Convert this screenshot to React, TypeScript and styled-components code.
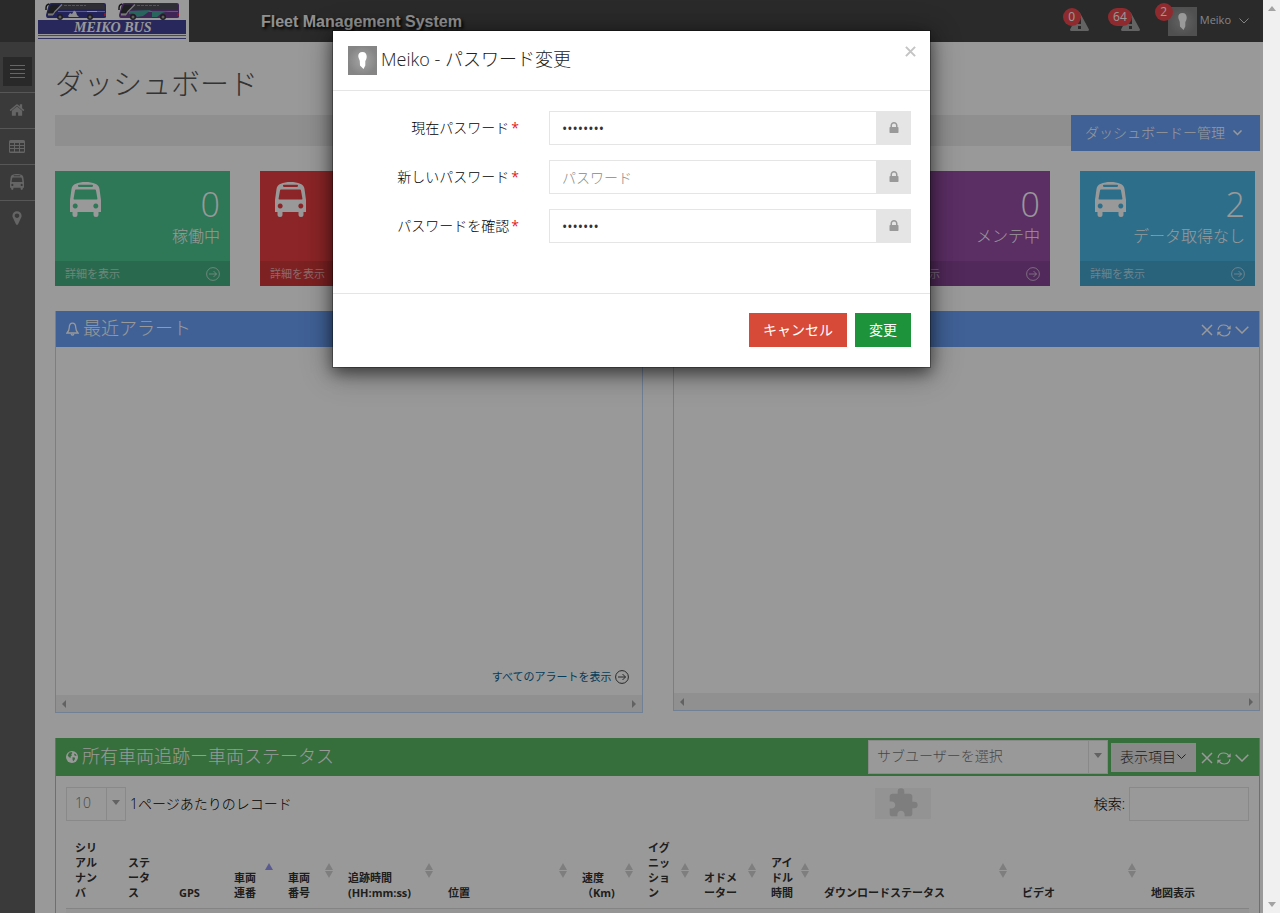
import React from "react";
import styled, { createGlobalStyle } from "styled-components";

const GlobalStyle = createGlobalStyle`
  *, *::before, *::after { box-sizing: border-box; }
  body {
    margin: 0;
    background: #fff;
    color: #000;
    font-family: "Open Sans", "Noto Sans CJK JP", sans-serif;
    font-size: 14px;
    font-weight: 300;
    line-height: 20px;
  }
  button, input, select { font: inherit; color: inherit; border-radius: 0; margin: 0; }
  button { cursor: pointer; border: 0; padding: 0; background: none; }
  h1, h2, p { margin: 0; font-weight: 300; }
  a { color: inherit; text-decoration: none; }
`;

/* ---------- shell ---------- */

const Shell = styled.div`
  display: flex;
  height: 100vh;
  overflow: hidden;
`;
const Page = styled.div`
  position: relative;
  flex: 1;
  min-width: 0;
  display: flex;
  flex-direction: column;
  overflow: hidden;
`;
const ScrollRail = styled.div<{ $horizontal?: boolean }>`
  display: flex;
  flex: none;
  flex-direction: ${(p) => (p.$horizontal ? "row" : "column")};
  justify-content: space-between;
  align-items: center;
  background: #f0f0f0;
  padding: ${(p) => (p.$horizontal ? "0 4px" : "5px 0")};
  ${(p) => (p.$horizontal ? "height: 17px;" : "width: 17px;")}
`;
const Main = styled.div`
  display: flex;
  flex: 1;
  min-height: 0;
`;

/* ---------- top bar ---------- */

const TopBar = styled.header`
  display: flex;
  flex: none;
  height: 42px;
  background: #464646;
  color: #ddd;
`;
const LogoLink = styled.a`
  display: block;
  width: 154px;
  height: 42px;
  margin-left: 35px;
  background: #fff;
`;
const AppName = styled.div`
  margin-left: 72px;
  padding-top: 12px;
  font: bold 16px/20px "Liberation Sans", sans-serif;
  color: #f0f0f0;
  text-shadow: 2px 2px 3px #000;
`;
const TopActions = styled.div`
  display: flex;
  margin-left: auto;
  padding-right: 14px;
`;
const TopButton = styled.button`
  position: relative;
  display: flex;
  align-items: center;
  height: 42px;
  margin-right: 32px;
  font-size: 11px;
  font-weight: 400;
  color: #ddd;
  &:last-child { margin: 0 0 0 -4px; }
  > span { margin: 0 8px 2px 3px; }
`;
const Badge = styled.span`
  && { margin: 0; }
  position: absolute;
  right: 8px;
  top: 8px;
  min-width: 18px;
  height: 18px;
  padding: 0 5px;
  border-radius: 9px;
  background: #ef484d;
  color: #fff;
  font-size: 12px;
  line-height: 18px;
  text-align: center;
  button:last-child > & { right: auto; left: -13px; top: 3px; }
`;

/* ---------- side bar ---------- */

const SideBar = styled.nav`
  flex: none;
  width: 35px;
  background: #626262;
  color: #a8a8a8;
`;
const ToggleButton = styled.button`
  display: flex;
  align-items: center;
  justify-content: center;
  width: 29px;
  height: 29px;
  margin: 15px 3px 6px;
  background: #454545;
  color: #aaa;
`;
const SideLink = styled.a`
  display: flex;
  align-items: center;
  justify-content: center;
  height: 36px;
  padding: 0 1px 1px 0;
  border-top: 1px solid #929292;
`;

/* ---------- content ---------- */

const Content = styled.main`
  flex: 1;
  min-width: 0;
  padding: 20px 3px 0 20px;
`;
const PageTitle = styled.h1`
  height: 53px;
  font-size: 29px;
  line-height: 44px;
  color: #555;
`;
const Crumbs = styled.div`
  display: flex;
  justify-content: space-between;
  height: 36px;
  margin-bottom: 20px;
`;
const CrumbBar = styled.div`
  flex: 1;
  height: 31px;
  background: #eee;
`;
const ManageButton = styled.button`
  display: flex;
  align-items: center;
  gap: 8px;
  height: 36px;
  padding: 0 18px 0 14px;
  background: #6ca2fb;
  color: #fff;
`;
const Tiles = styled.div`
  display: grid;
  grid-template-columns: repeat(6, 1fr);
  gap: 30px;
  margin: 0 5px 25px 0;
`;
const Tile = styled.section<{ $color: string }>`
  background: ${(p) => p.$color};
  color: #fff;
`;
const TileTop = styled.div`
  display: flex;
  justify-content: space-between;
  height: 90px;
  padding: 11px 10px 0 15px;
  white-space: nowrap;
`;
const TileFigures = styled.div`
  text-align: right;
  font-size: 16px;
  line-height: 20px;
  > strong {
    display: block;
    padding: 2px 0;
    font-size: 34px;
    line-height: 40px;
    font-weight: 300;
  }
`;
const TileMore = styled.a`
  display: flex;
  align-items: center;
  justify-content: space-between;
  height: 25px;
  padding: 0 10px;
  background: rgba(0, 0, 0, 0.1);
  font-size: 11px;
  font-weight: 400;
  color: rgba(255, 255, 255, 0.6);
`;
const PanelRow = styled.div`
  display: grid;
  grid-template-columns: 1fr 1fr;
  align-items: start;
  gap: 30px;
  margin-bottom: 25px;
`;
const Panel = styled.section<{ $green?: boolean }>`
  border: 1px solid ${(p) => (p.$green ? "#8fd49a" : "#bed5fb")};
  border-top: 0;
`;
const PanelHead = styled.div<{ $green?: boolean }>`
  display: flex;
  align-items: center;
  height: ${(p) => (p.$green ? 38 : 36)}px;
  padding: 0 10px;
  background: ${(p) => (p.$green ? "#5ab865" : "#6ca2fb")};
  color: #fff;
`;
const PanelTitle = styled.h2`
  display: flex;
  align-items: center;
  gap: 4px;
  margin-right: auto;
  padding-bottom: 2px;
  font-size: 18px;
  line-height: 26px;
  svg { margin-top: 2px; }
`;
const Tools = styled.div`
  display: flex;
  align-items: center;
  gap: 4px;
  padding-top: 2px;
  button { display: flex; }
`;
const PanelBody = styled.div<{ $height: number }>`
  display: flex;
  align-items: flex-end;
  justify-content: flex-end;
  height: ${(p) => p.$height}px;
  padding: 0 13px 8px;
  font-size: 11px;
`;
const AllAlerts = styled.a`
  display: flex;
  align-items: center;
  gap: 3px;
  color: #0a6494;
  font-weight: 400;
  svg { color: #444; }
`;

const SelectBox = styled.span<{ $width: number; $push?: number }>`
  position: relative;
  display: inline-flex;
  flex: none;
  width: ${(p) => p.$width}px;
  margin-right: ${(p) => p.$push ?? 0}px;
  select {
    appearance: none;
    width: 100%;
    height: 34px;
    padding: 0 24px 2px 8px;
    border: 1px solid #e5e5e5;
    background: #fff;
    color: #777;
  }
  > span {
    position: absolute;
    inset: 1px 1px 1px auto;
    width: 19px;
    padding-bottom: 4px;
    border-left: 1px solid #e5e5e5;
    display: flex;
    align-items: center;
    justify-content: center;
    pointer-events: none;
  }
`;
const ColumnsButton = styled.button`
  display: flex;
  align-items: center;
  gap: 1px;
  height: 29px;
  margin-right: 5px;
  padding: 0 10px 0 9px;
  background: #e5e5e5;
  color: #333;
`;
const Controls = styled.div`
  display: flex;
  align-items: center;
  height: 34px;
  margin: 11px 10px 12px;
`;
const RecordsLabel = styled.label`
  display: flex;
  align-items: center;
  gap: 4px;
  flex: 1;
`;
const PluginBox = styled.span`
  display: flex;
  align-items: center;
  justify-content: center;
  width: 56px;
  height: 31px;
  margin-bottom: 2px;
  background: #f5f5f5;
  color: #d2d2d2;
`;
const SearchLabel = styled.label`
  display: flex;
  align-items: center;
  justify-content: flex-end;
  gap: 4px;
  width: 318px;
  input {
    width: 120px;
    height: 34px;
    border: 1px solid #e5e5e5;
    background: #fff;
    padding: 0 8px;
  }
`;
const TableWrap = styled.div`
  padding: 0 10px;
`;
const Table = styled.table`
  width: 100%;
  table-layout: fixed;
  border-collapse: collapse;
  font-size: 11px;
  line-height: 15px;
  th {
    position: relative;
    height: 75px;
    padding: 6px 0 8px 9px;
    border-bottom: 1px solid #ddd;
    text-align: left;
    vertical-align: bottom;
    white-space: nowrap;
    font-weight: 700;
    color: #333;
  }
  td { height: 36px; background: #f9f9f9; }
`;
const SortMark = styled.svg`
  position: absolute;
  right: 6px;
  bottom: 30px;
`;

/* ---------- dialog ---------- */

const Backdrop = styled.div`
  position: absolute;
  inset: 0;
  display: flex;
  justify-content: center;
  align-items: flex-start;
  padding-top: 30px;
  background: rgba(0, 0, 0, 0.4);
`;
const Dialog = styled.form`
  width: 599px;
  max-width: 100%;
  background: #fff;
  background-clip: padding-box;
  border: 1px solid rgba(0, 0, 0, 0.3);
  box-shadow: 0 5px 15px rgba(0, 0, 0, 0.5), 0 5px 30px rgba(0, 0, 0, 0.3);
`;
const DialogHead = styled.div`
  display: flex;
  align-items: flex-start;
  height: 60px;
  padding: 15px 14px 0 15px;
  border-bottom: 1px solid #e5e5e5;
  > button { display: flex; margin-left: auto; color: #c4c4c4; }
`;
const DialogTitle = styled.h2`
  display: flex;
  gap: 4px;
  font-size: 18px;
  line-height: 26px;
  color: #222;
`;
const DialogBody = styled.div`
  display: grid;
  gap: 15px;
  padding: 20px 19px 50px 18px;
`;
const Field = styled.div`
  display: flex;
  align-items: center;
  justify-content: space-between;
  > label { width: 168px; text-align: right; }
  > label i { color: #e02222; font-style: normal; font-weight: 400; padding-left: 2px; }
`;
const InputGroup = styled.div`
  display: flex;
  width: 362px;
  input {
    flex: 1;
    min-width: 0;
    height: 34px;
    padding: 0 12px;
    border: 1px solid #e5e5e5;
    border-right: 0;
    background: #fff;
    color: #333;
    font-weight: 400;
  }
  input::placeholder { color: #888; opacity: 1; font-weight: 300; }
  > span {
    display: flex;
    align-items: center;
    justify-content: center;
    width: 35px;
    background: #e5e5e5;
    color: #999;
  }
`;
const DialogFoot = styled.div`
  display: flex;
  justify-content: flex-end;
  gap: 8px;
  padding: 19px 19px 20px;
  border-top: 1px solid #e5e5e5;
`;
const ActionButton = styled.button<{ $color: string }>`
  height: 34px;
  padding: 0 14px;
  background: ${(p) => p.$color};
  color: #fff;
  font-weight: 400;
`;

/* ---------- drawings ---------- */

const BusIcon = ({ width, height }: { width: number; height: number }) => (
  <svg width={width} height={height} viewBox="0 0 31 35" fill="currentColor" fillRule="evenodd" aria-hidden="true">
    <path d="M0 30V18L1.500 7C2 2 8 0 15.500 0S29 2 29.500 7L31 18V30H28.500V32.500a2.500 2.500 0 0 1-5 0V30H7.500V32.500a2.500 2.500 0 0 1-5 0V30ZM9 2.700a1.100 1.100 0 0 0 0 2.200H22a1.100 1.100 0 0 0 0-2.200ZM6 7.600a1 1 0 0 0-1 .8L3.600 16.600a.8.8 0 0 0 .8 1H26.600a.8.8 0 0 0 .8-1L26 8.400a1 1 0 0 0-1-.8ZM5.200 21.600a2.500 2.500 0 1 0 .01 0ZM25.800 21.600a2.500 2.500 0 1 0 .01 0Z" />
  </svg>
);
const Glyph = ({ d, size }: { d: string; size: number }) => (
  <svg width={size} height={size} viewBox="0 0 1792 1792" fill="currentColor" aria-hidden="true">
    <path d={d} />
  </svg>
);
const HOME =
  "M1472 992v480q0 26-19 45t-45 19h-384v-384h-256v384h-384q-26 0-45-19t-19-45v-480q0-1 .5-3t.5-3l575-474 575 474q1 2 1 6zm223-69l-62 74q-8 9-21 11h-3q-13 0-21-7l-692-577-692 577q-12 8-24 7-13-2-21-11l-62-74q-8-10-7-23.500t11-21.500l719-599q32-26 76-26t76 26l244 204v-195q0-14 9-23t23-9h192q14 0 23 9t9 23v408l219 182q10 8 11 21.500t-7 23.500z";
const PIN =
  "M1152 640q0-106-75-181t-181-75-181 75-75 181 75 181 181 75 181-75 75-181zm256 0q0 109-33 179l-364 774q-16 33-47.500 52t-67.500 19-67.500-19-46.500-52l-365-774q-33-70-33-179 0-212 150-362t362-150 362 150 150 362z";
const LOCK =
  "M640 768h512v-192q0-106-75-181t-181-75-181 75-75 181v192zm832 96v576q0 40-28 68t-68 28h-960q-40 0-68-28t-28-68v-576q0-40 28-68t68-28h32v-192q0-184 132-316t316-132 316 132 132 316v192h32q40 0 68 28t28 68z";

const MenuIcon = () => (
  <svg width="15" height="14" viewBox="0 0 15 14" stroke="currentColor" aria-hidden="true">
    <path d="M0 .5H15M0 4.500H15M0 8.500H15M0 12.500H15" />
  </svg>
);
const GridIcon = () => (
  <svg width="16" height="13" viewBox="0 0 16 13" fill="currentColor" fillRule="evenodd" aria-hidden="true">
    <path d="M1.500 0H14.500A1.500 1.500 0 0 1 16 1.500V11.500A1.500 1.500 0 0 1 14.500 13H1.500A1.500 1.500 0 0 1 0 11.500V1.500A1.500 1.500 0 0 1 1.500 0ZM1 3V5H5V3ZM6 3V5H10V3ZM11 3V5H15V3ZM1 6V8H5V6ZM6 6V8H10V6ZM11 6V8H15V6ZM1 9V11.500H5V9ZM6 9V11.500H10V9ZM11 9V11.500H15V9Z" />
  </svg>
);
const WarningIcon = () => (
  <svg width="19" height="19" viewBox="0 0 19 19" fill="#a6a6a6" fillRule="evenodd" aria-hidden="true">
    <path d="M9.500 0L19 17.500Q19 19 17.500 19H1.500Q0 19 0 17.500ZM8 6V12H11V6ZM8 14V17H11V14Z" />
  </svg>
);
const ArrowCircle = () => (
  <svg width="14" height="14" viewBox="0 0 14 14" fill="none" stroke="currentColor" aria-hidden="true">
    <circle cx="7" cy="7" r="6.400" />
    <path d="M3 7H10.500M7.500 4L10.500 7L7.500 10" />
  </svg>
);
const BellIcon = () => (
  <svg width="13" height="14" viewBox="0 0 13 14" fill="none" stroke="currentColor" strokeWidth="1.300" aria-hidden="true">
    <path d="M6.500 1.200C3.900 1.200 3.300 3.500 3.200 6C3.100 8.200 2.400 9.600 1 11H12C10.600 9.600 9.900 8.200 9.800 6C9.700 3.500 9.100 1.200 6.500 1.200ZM5 12.200Q6.500 13.800 8 12.200" />
  </svg>
);
const GlobeIcon = () => (
  <svg width="12" height="12" viewBox="0 0 12 12" aria-hidden="true">
    <circle cx="6" cy="6" r="6" fill="#fff" />
    <path d="M3 1.700L5.500 1L6.500 2L5.200 3.300L6 4.300L4.600 5.500L4.800 6.800L3 6.200L1.700 4.400ZM8 2.500L9.800 3.200L10.600 5L8.500 4.600ZM6.500 6.200L8.800 6.600L9 8L7.400 10.300L6.600 9Z" fill="#5ab865" />
  </svg>
);
const Chevron = ({ size, stroke = 1.5 }: { size: number; stroke?: number }) => (
  <svg width={size} height={(size * 6) / 10} viewBox="0 0 10 6" fill="none" stroke="currentColor" aria-hidden="true">
    <path d="M.5 .5L5 5L9.500 .5" strokeWidth={stroke} vectorEffect="non-scaling-stroke" />
  </svg>
);
const Cross = ({ size, stroke = 1.5 }: { size: number; stroke?: number }) => (
  <svg width={size} height={size} viewBox="0 0 12 12" fill="none" stroke="currentColor" aria-hidden="true">
    <path d="M1 1L11 11M11 1L1 11" strokeWidth={stroke} vectorEffect="non-scaling-stroke" />
  </svg>
);
const RefreshIcon = () => (
  <svg width="14" height="13" viewBox="0 0 14 13" fill="none" stroke="currentColor" strokeWidth="1.200" aria-hidden="true">
    <path d="M1 5.800C1.500 2.700 4 1 6.800 1C9 1 10.800 2 11.800 3.700M13 7.200C12.500 10.300 10 12 7.200 12C5 12 3.200 11 2.200 9.300" />
    <path d="M13.700 1.300V5.300H9.700ZM.3 11.700V7.700H4.300Z" fill="currentColor" stroke="none" />
  </svg>
);
const Triangle = ({ dir, color = "#a3a3a3" }: { dir: "up" | "down" | "left" | "right"; color?: string }) => {
  const points = { up: "0,6 4,1 8,6", down: "0,2 8,2 4,7", left: "6,0 2,4 6,8", right: "2,0 6,4 2,8" }[dir];
  return (
    <svg width="8" height="8" viewBox="0 0 8 8" fill={color} aria-hidden="true">
      <polygon points={points} />
    </svg>
  );
};
const Avatar = () => (
  <svg width="29" height="29" viewBox="0 0 29 29" aria-hidden="true">
    <defs>
      <radialGradient id="avatarShade">
        <stop offset="0" stopColor="#a5a5a5" />
        <stop offset="1" stopColor="#858585" />
      </radialGradient>
    </defs>
    <rect width="29" height="29" fill="url(#avatarShade)" />
    <path d="M14.500 6C11.500 6 10 8 10.300 10.500C10.500 12.500 11.600 13.500 11.800 15L12 19.500L15.500 23L17.300 19.500V15C18.300 13.500 18.700 12 18.700 10.500C18.700 8 17.200 6 14.500 6Z" fill="#fff" />
  </svg>
);
const Coach = ({ x, body, accent }: { x: number; body: string; accent: React.ReactNode }) => (
  <g transform={`translate(${x} 3)`}>
    <path d="M3 1Q4 0 6 0H58Q60 0 60 2V14Q60 15 58 15H2Q0 15 0 12Z" fill={body} />
    <path d="M16 1H57Q59 1 59 6.500H12Z" fill="#4d4d58" />
    <path d="M5 1.500H14L9 10H1.500Z" fill="#2f3236" />
    <path d="M16 1.500L9 8.500L7 11.500H2" stroke="#c9c9cc" strokeWidth="1.200" fill="none" />
    <path d="M18 2.500H40" stroke="#8c8c9c" strokeDasharray="3 1" />
    <path d="M12 8.500H59" stroke="#9a9ac0" />
    {accent}
    <path d="M3 1Q-.5 1.500 0 7" stroke="#222" fill="none" strokeWidth="1.500" />
    <rect x="2" y="10.500" width="5" height="2" fill="#c8c8c8" />
    <rect x="58" y="10" width="2" height="3" fill="#e24" />
    <circle cx="14" cy="14" r="3" fill="#333" />
    <circle cx="14" cy="14" r="1.500" fill="#999" />
    <circle cx="44" cy="14" r="3" fill="#333" />
    <circle cx="44" cy="14" r="1.500" fill="#999" />
  </g>
);
const Logo = () => (
  <svg width="154" height="42" viewBox="0 0 154 42" role="img" aria-label="MEIKO BUS">
    <Coach
      x={11}
      body="#393b96"
      accent={
        <>
          <path d="M22 13L24 10L26 11L28 7.500L30 9L31 12L33 14H23Z" fill="#eee" />
          <path d="M41 8.500H51" stroke="#eee" />
        </>
      }
    />
    <Coach
      x={84}
      body="#6b3f92"
      accent={<path d="M10 8L32 7L24 13L18 14Q16 9 10 11ZM33 8H50L43 10L38 14H33Z" fill="#43a99a" />}
    />
    <rect x="3" y="20" width="148" height="14" fill="#444399" />
    <path d="M3 35.500H151" stroke="#4ba35e" />
    <path d="M3 38.500H151" stroke="#5555a5" />
    <text x="39" y="32" fill="#fff" fontFamily="Liberation Serif, serif" fontSize="14" fontWeight="700" fontStyle="italic">
      MEIKO BUS
    </text>
  </svg>
);

/* ---------- parts ---------- */

const PanelTools = () => (
  <Tools>
    <button type="button" aria-label="閉じる"><Cross size={12} /></button>
    <button type="button" aria-label="更新"><RefreshIcon /></button>
    <button type="button" aria-label="折りたたむ"><Chevron size={14} /></button>
  </Tools>
);

const tiles: { color: string; value?: number; label?: string }[] = [
  { color: "#4dc691", value: 0, label: "稼働中" },
  { color: "#e93e41" },
  { color: "#f0ad4e" },
  { color: "#6ca2fb" },
  { color: "#984da7", value: 0, label: "メンテ中" },
  { color: "#4bb7e6", value: 2, label: "データ取得なし" },
];

type Column = { width: number; lines: string[]; sort?: "asc" | "both" };
const columns: Column[] = [
  { width: 53, lines: ["シリ", "アル", "ナン", "バ"] },
  { width: 51, lines: ["ステ", "ータ", "ス"] },
  { width: 55, lines: ["GPS"] },
  { width: 54, lines: ["車両", "連番"], sort: "asc" },
  { width: 60, lines: ["車両", "番号"], sort: "both" },
  { width: 100, lines: ["追跡時間", "(HH:mm:ss)"], sort: "both" },
  { width: 134, lines: ["位置"], sort: "both" },
  { width: 66, lines: ["速度", "（Km)"], sort: "both" },
  { width: 56, lines: ["イグ", "ニッ", "ショ", "ン"], sort: "both" },
  { width: 67, lines: ["オドメ", "ーター"], sort: "both" },
  { width: 53, lines: ["アイ", "ドル", "時間"], sort: "both" },
  { width: 198, lines: ["ダウンロードステータス"], sort: "both" },
  { width: 129, lines: ["ビデオ"], sort: "both" },
  { width: 107, lines: ["地図表示"] },
];
const tableWidth = columns.reduce((sum, c) => sum + c.width, 0);

const fields = [
  { id: "current", label: "現在パスワード", value: "password" },
  { id: "next", label: "新しいパスワード", value: "" },
  { id: "confirm", label: "パスワードを確認", value: "confirm" },
];

export default function App() {
  return (
    <Shell>
      <GlobalStyle />
      <Page>
        <TopBar>
          <LogoLink href="#"><Logo /></LogoLink>
          <AppName>Fleet Management System</AppName>
          <TopActions>
            <TopButton type="button" aria-label="警告"><WarningIcon /><Badge>0</Badge></TopButton>
            <TopButton type="button" aria-label="アラート"><WarningIcon /><Badge>64</Badge></TopButton>
            <TopButton type="button">
              <Avatar />
              <Badge>2</Badge>
              <span>Meiko</span>
              <Chevron size={10} stroke={1} />
            </TopButton>
          </TopActions>
        </TopBar>
        <Main>
          <SideBar>
            <ToggleButton type="button" aria-label="メニュー"><MenuIcon /></ToggleButton>
            <SideLink href="#" aria-label="ホーム"><Glyph d={HOME} size={16} /></SideLink>
            <SideLink href="#" aria-label="一覧"><GridIcon /></SideLink>
            <SideLink href="#" aria-label="車両"><BusIcon width={14} height={16} /></SideLink>
            <SideLink href="#" aria-label="地図"><Glyph d={PIN} size={16} /></SideLink>
          </SideBar>
          <Content>
            <PageTitle>ダッシュボード</PageTitle>
            <Crumbs>
              <CrumbBar />
              <ManageButton type="button">ダッシュボードー管理<Chevron size={9} /></ManageButton>
            </Crumbs>
            <Tiles>
              {tiles.map((t) => (
                <Tile key={t.color} $color={t.color}>
                  <TileTop>
                    <BusIcon width={31} height={35} />
                    {t.label && <TileFigures><strong>{t.value}</strong>{t.label}</TileFigures>}
                  </TileTop>
                  <TileMore href="#">詳細を表示<ArrowCircle /></TileMore>
                </Tile>
              ))}
            </Tiles>
            <PanelRow>
              <Panel>
                <PanelHead>
                  <PanelTitle><BellIcon />最近アラート</PanelTitle>
                  <PanelTools />
                </PanelHead>
                <PanelBody $height={348}>
                  <AllAlerts href="#">すべてのアラートを表示<ArrowCircle /></AllAlerts>
                </PanelBody>
                <ScrollRail $horizontal><Triangle dir="left" /><Triangle dir="right" /></ScrollRail>
              </Panel>
              <Panel>
                <PanelHead><PanelTitle /><PanelTools /></PanelHead>
                <PanelBody $height={346} />
                <ScrollRail $horizontal><Triangle dir="left" /><Triangle dir="right" /></ScrollRail>
              </Panel>
            </PanelRow>
            <Panel $green>
              <PanelHead $green>
                <PanelTitle><GlobeIcon />所有車両追跡ー車両ステータス</PanelTitle>
                <SelectBox $width={240} $push={3}>
                  <select aria-label="サブユーザー"><option>サブユーザーを選択</option></select>
                  <span><Triangle dir="down" /></span>
                </SelectBox>
                <ColumnsButton type="button">表示項目<Chevron size={9} stroke={1} /></ColumnsButton>
                <PanelTools />
              </PanelHead>
              <Controls>
                <RecordsLabel>
                  <SelectBox $width={60}>
                    <select><option>10</option></select>
                    <span><Triangle dir="down" /></span>
                  </SelectBox>
                  1ページあたりのレコード
                </RecordsLabel>
                <PluginBox>
                  <svg width="32" height="32" viewBox="0 0 24 24" fill="currentColor" aria-hidden="true">
                    <path d="M20.500 11H19V7c0-1.100-.9-2-2-2h-4V3.500a2.500 2.500 0 0 0-5 0V5H4c-1.100 0-1.990.9-1.990 2v3.800H3.500c1.490 0 2.700 1.210 2.700 2.700s-1.210 2.700-2.700 2.700H2V20c0 1.100.9 2 2 2h3.800v-1.500c0-1.490 1.210-2.700 2.700-2.700 1.490 0 2.700 1.210 2.700 2.700V22H17c1.100 0 2-.9 2-2v-4h1.500a2.500 2.500 0 0 0 0-5z" />
                  </svg>
                </PluginBox>
                <SearchLabel>検索:<input type="search" /></SearchLabel>
              </Controls>
              <TableWrap>
                <Table>
                  <colgroup>
                    {columns.map((c, i) => (
                      <col key={i} style={{ width: `${(c.width / tableWidth) * 100}%` }} />
                    ))}
                  </colgroup>
                  <thead>
                    <tr>
                      {columns.map((c, i) => (
                        <th key={i} scope="col">
                          {c.lines.map((line, n) => (
                            <React.Fragment key={n}>{n > 0 && <br />}{line}</React.Fragment>
                          ))}
                          {c.sort && (
                            <SortMark width="8" height="15" viewBox="0 0 8 15">
                              <polygon points="0,7 4,0 8,7" fill={c.sort === "asc" ? "#9797f0" : "#d3d3d3"} />
                              {c.sort === "both" && <polygon points="0,8 8,8 4,15" fill="#d3d3d3" />}
                            </SortMark>
                          )}
                        </th>
                      ))}
                    </tr>
                  </thead>
                  <tbody><tr><td colSpan={columns.length} /></tr></tbody>
                </Table>
              </TableWrap>
            </Panel>
          </Content>
        </Main>
        <Backdrop>
          <Dialog role="dialog" aria-labelledby="dialog-title" onSubmit={(e) => e.preventDefault()}>
            <DialogHead>
              <DialogTitle id="dialog-title"><Avatar />Meiko - パスワード変更</DialogTitle>
              <button type="button" aria-label="閉じる"><Cross size={11} stroke={2} /></button>
            </DialogHead>
            <DialogBody>
              {fields.map((f) => (
                <Field key={f.id}>
                  <label htmlFor={f.id}>{f.label}<i>*</i></label>
                  <InputGroup>
                    <input id={f.id} type="password" placeholder="パスワード" defaultValue={f.value} />
                    <span><Glyph d={LOCK} size={14} /></span>
                  </InputGroup>
                </Field>
              ))}
            </DialogBody>
            <DialogFoot>
              <ActionButton type="button" $color="#d84a38">キャンセル</ActionButton>
              <ActionButton type="submit" $color="#1d943b">変更</ActionButton>
            </DialogFoot>
          </Dialog>
        </Backdrop>
      </Page>
      <ScrollRail><Triangle dir="up" /><Triangle dir="down" /></ScrollRail>
    </Shell>
  );
}
